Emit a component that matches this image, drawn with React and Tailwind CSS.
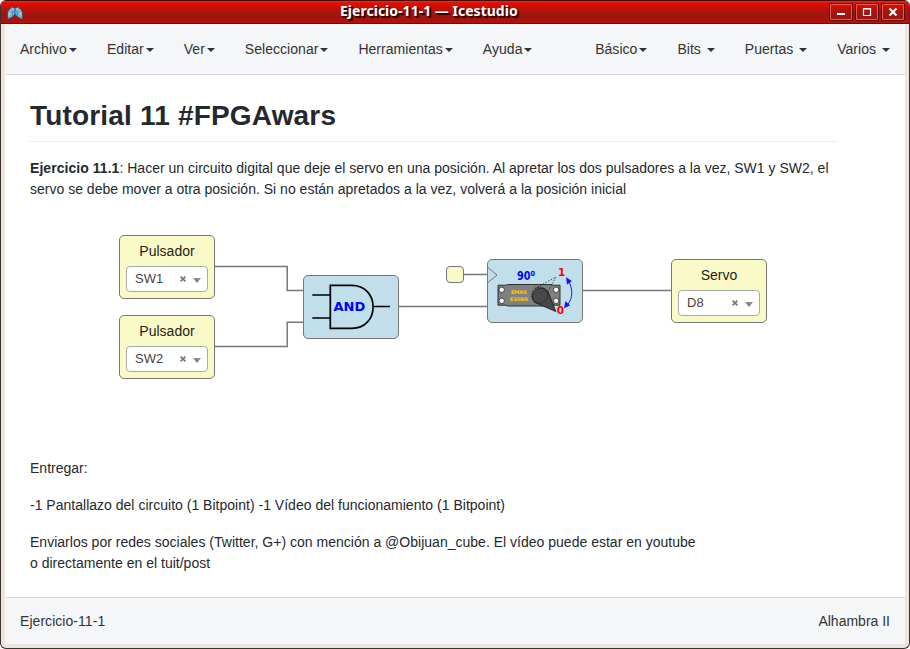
import React from "react";

const leftMenu = ["Archivo", "Editar", "Ver", "Seleccionar", "Herramientas", "Ayuda"];
const rightMenu = ["Básico", "Bits ", "Puertas ", "Varios "];

function MenuItem({ label }) {
  return (
    <li className="flex items-center px-[15px] tracking-[0.035px] whitespace-pre">
      {label}
      <span className="ml-[2px] mt-px h-0 w-0 border-x-4 border-t-4 border-x-transparent border-t-[#333]" />
    </li>
  );
}

function WindowButton({ children }) {
  return (
    <span className="flex h-[18px] w-[24px] items-center justify-center rounded-[2px] border border-[#5e0d09] shadow-[inset_0_0_0_1px_#d8605a]">
      <svg width="22" height="16" viewBox="0 0 22 16" fill="none" stroke="#fff">
        {children}
      </svg>
    </span>
  );
}

function TitleBar() {
  return (
    <header className="flex h-6 items-center border-t border-b border-t-[#4a0a06] border-b-[#5e1512] bg-[linear-gradient(#f5291d_0,#dc0f03_2px,#d30d03_6px,#a31610_11px,#a0150f_15px,#b31109_22px)] pr-1 pl-[6px]">
      <svg width="16" height="14" viewBox="0 0 16 14" stroke="#2b7396" strokeWidth="0.5" strokeLinejoin="round" className="mt-[2px]">
        <path d="M4.500 1.500 1 5.500V13l4.500-2.500L8 7.500l2.500 3L15 13V5.500l-3.500-4L8 2.500z" fill="#7ccbee" />
        <path d="M4.500 1.500 8 2.500 5.500 6.500zM11.500 1.500 8 2.500l2.500 4z" fill="#a9e0f7" />
        <path d="M1 5.500v7.500l4.500-6.500zM15 5.500V13l-4.500-6.500z" fill="#92d6f3" />
        <path d="M5.500 6.500 8 2.500v5l-2.500 3zM10.500 6.500 8 2.500v5l2.500 3z" fill="#5cb4dc" />
      </svg>
      <h1 className="-mt-[2px] ml-[317px] flex-1 font-['Noto_Sans','Open_Sans',sans-serif] text-[14px] leading-5 font-bold tracking-[0.02px] whitespace-nowrap text-white [text-shadow:1px_1px_1px_#300,2px_2px_1px_#300]">
        Ejercicio-11-1 — Icestudio
      </h1>
      <div className="flex justify-end gap-[2px]">
        <WindowButton><path d="M7 10h8" strokeWidth="2" /></WindowButton>
        <WindowButton><path d="M7.500 4.500h7v7h-7zM7 5h8" strokeWidth="1.200" /></WindowButton>
        <WindowButton><path d="m7.500 4.500 7 7m0-7-7 7" strokeWidth="2.200" /></WindowButton>
      </div>
    </header>
  );
}

function PortBlock({ title, pin, className }) {
  return (
    <div className={`absolute flex h-16 w-24 flex-col items-center rounded-[5px] border border-[#777] bg-[#fafac8] ${className}`}>
      <span className="mt-[5px] text-[14px] leading-5 text-[#222]">{title}</span>
      <div className="mt-[5px] flex h-[26px] w-[82px] items-center rounded-[4px] border border-[#aaa] bg-white pl-2 text-[13px] text-[#444]">
        <span className="-mt-[2px] flex-1">{pin}</span>
        <svg width="6" height="6" viewBox="0 0 6 6" stroke="#777" strokeWidth="1.700" className="-mt-px mr-[7px]">
          <path d="m.6.6 4.800 4.800m0-4.800L.6 5.400" />
        </svg>
        <span className="mt-[2px] mr-[6px] h-0 w-0 border-x-4 border-t-[5px] border-x-transparent border-t-[#888]" />
      </div>
    </div>
  );
}

function AndBlock() {
  return (
    <div className="absolute top-[75px] left-[298px] h-16 w-24 rounded-[5px] border border-[#777] bg-[#c0dfeb]">
      <svg width="94" height="62" viewBox="304 276 94 62" fill="none" stroke="#000" strokeWidth="1.700">
        <path d="M312.300 295H330M312.300 318H330M373.500 306.500h16.500" />
        <path d="M330.300 285.400h21.500c13 0 21.300 9.500 21.300 21.500s-8.300 21.500-21.300 21.500h-21.500z" />
        <text x="333.500" y="311" fill="#0000ff" stroke="none" className="font-['DejaVu_Sans',sans-serif] text-[13px] font-bold">AND</text>
      </svg>
    </div>
  );
}

function ServoDriverBlock() {
  return (
    <div className="absolute top-[59px] left-[482px] h-16 w-24 rounded-[5px] border border-[#777] bg-[#c0dfeb]">
      <svg width="94" height="62" viewBox="488 260 94 62" fill="none" className="font-['DejaVu_Sans',sans-serif] font-bold">
        <path d="m488 267.500 9 7.500-9 7.500" stroke="#777" />
        <path d="M498 285.200h8l2-.7h43l2 .7h7v20h-7l-2 .8h-43l-2-.8h-8z" fill="#808080" stroke="#222" strokeWidth=".9" />
        <g fill="#fff" stroke="#222" strokeWidth=".8">
          <circle cx="501.700" cy="289.800" r="2.700" />
          <circle cx="501.700" cy="300.800" r="2.700" />
          <circle cx="556.200" cy="289.800" r="2.700" />
          <circle cx="556.200" cy="300.800" r="2.700" />
        </g>
        <g fill="#fdc60a" className="text-[5.200px]">
          <text x="511" y="294" textLength="16">EMAX</text>
          <text x="510" y="301" textLength="18">ES08A</text>
        </g>
        <path d="m535 288.500 21-11.500-8 14" stroke="#222" strokeWidth=".8" strokeDasharray="1.500 1.500" />
        <path d="M534.500 302.300A8.600 8.600 0 1 1 548.200 292L555.800 311.500z" fill="#484848" stroke="#111" strokeWidth=".8" />
        <circle cx="539.700" cy="295.200" r="8" stroke="#111" strokeWidth=".8" strokeDasharray="1.500 1" />
        <text x="517" y="280" textLength="13.500" lengthAdjust="spacingAndGlyphs" fill="#0000ff" className="text-[11.500px]">90</text>
        <text x="530.500" y="275.800" textLength="4.500" lengthAdjust="spacingAndGlyphs" fill="#0000ff" className="text-[7px]">0</text>
        <text x="558" y="275.500" fill="#ff0000" className="text-[10.500px]">1</text>
        <text x="556.800" y="314" fill="#ff0000" className="text-[10.500px]">0</text>
        <path d="M568.500 281c4.500 8 4.500 17-1 24" stroke="#1717ee" strokeWidth="1" />
        <path d="m566 277.300 6 3.700-5 3.500zM564 308.300l6-2.800-4.500-4.500z" fill="#1717ee" />
      </svg>
    </div>
  );
}

function Circuit() {
  return (
    <section className="relative h-[258px]">
      <svg width="900" height="257" viewBox="5 200 900 257" fill="none" stroke="#777" strokeWidth="1.500">
        <path d="M215 266.400h72.200v24.200h16M215 346.400h72.200v-24.200h16M399 306.400h88M464 274.400h23M583 290.400h88" />
      </svg>
      <PortBlock title="Pulsador" pin="SW1" className="top-[35px] left-[114px]" />
      <PortBlock title="Pulsador" pin="SW2" className="top-[115px] left-[114px]" />
      <PortBlock title="Servo" pin="D8" className="top-[59px] left-[666px]" />
      <AndBlock />
      <ServoDriverBlock />
      <div className="absolute top-[66px] left-[441px] h-[17px] w-[18px] rounded-[4px] border border-[#777] bg-[#fafac8]" />
    </section>
  );
}

export default function App() {
  return (
    <div className="h-[649px] w-[910px] bg-white font-['Liberation_Sans',Arial,sans-serif] text-sm leading-[21px] text-[#24292e]">
      <div className="flex h-full flex-col overflow-hidden rounded-[6px] border-x border-b border-[#3c3330] bg-[#ece5de]">
        <TitleBar />
        <div className="mx-1 mb-1 flex flex-1 flex-col bg-white">
          <nav className="flex h-[51px] justify-between border-b border-[#d5d8dc] bg-[#f5f6f8] text-[#333]">
            <ul className="flex">{leftMenu.map((m) => <MenuItem key={m} label={m} />)}</ul>
            <ul className="flex">{rightMenu.map((m) => <MenuItem key={m} label={m} />)}</ul>
          </nav>
          <main className="flex-1">
            <div className="mr-[67px] ml-[25px]">
              <h2 className="mb-4 h-[67px] border-b border-[#eaecef] pt-6 text-[28px] leading-[34px] font-bold tracking-[0.18px]">Tutorial 11 #FPGAwars</h2>
              <p className="tracking-[0.008px]"><b className="tracking-[0.05px]">Ejercicio 11.1</b>: Hacer un circuito digital que deje el servo en una posición. Al apretar los dos pulsadores a la vez, SW1 y SW2, el servo se debe mover a otra posición. Si no están apretados a la vez, volverá a la posición inicial</p>
            </div>
            <Circuit />
            <div className="ml-[25px] flex flex-col gap-4 tracking-[0.012px]">
              <p>Entregar:</p>
              <p>-1 Pantallazo del circuito (1 Bitpoint) -1 Vídeo del funcionamiento (1 Bitpoint)</p>
              <p>Enviarlos por redes sociales (Twitter, G+) con mención a @Obijuan_cube. El vídeo puede estar en youtube<br />o directamente en el tuit/post</p>
            </div>
          </main>
          <footer className="flex h-[47px] items-center justify-between border-t border-[#d5d8dc] bg-[#f5f6f8] px-[15px] text-[#333]">
            <span className="tracking-[0.05px]">Ejercicio-11-1</span>
            <span>Alhambra II</span>
          </footer>
        </div>
      </div>
    </div>
  );
}
